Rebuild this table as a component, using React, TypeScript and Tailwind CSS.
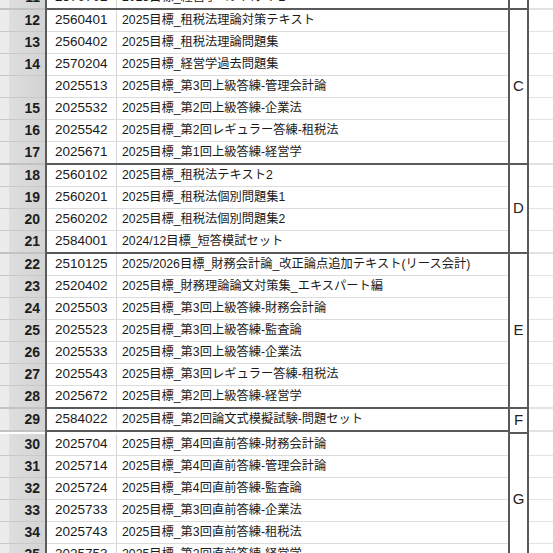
type Row = { no: string; code: string; title: string };
type Group = { letter: string; rows: Row[] };

const groups: Group[] = [
  { letter: "", rows: [{ no: "11", code: "2570702", title: "2025目標_経営学コンパクト2" }] },
  {
    letter: "C",
    rows: [
      { no: "12", code: "2560401", title: "2025目標_租税法理論対策テキスト" },
      { no: "13", code: "2560402", title: "2025目標_租税法理論問題集" },
      { no: "14", code: "2570204", title: "2025目標_経営学過去問題集" },
      { no: "", code: "2025513", title: "2025目標_第3回上級答練-管理会計論" },
      { no: "15", code: "2025532", title: "2025目標_第2回上級答練-企業法" },
      { no: "16", code: "2025542", title: "2025目標_第2回レギュラー答練-租税法" },
      { no: "17", code: "2025671", title: "2025目標_第1回上級答練-経営学" },
    ],
  },
  {
    letter: "D",
    rows: [
      { no: "18", code: "2560102", title: "2025目標_租税法テキスト2" },
      { no: "19", code: "2560201", title: "2025目標_租税法個別問題集1" },
      { no: "20", code: "2560202", title: "2025目標_租税法個別問題集2" },
      { no: "21", code: "2584001", title: "2024/12目標_短答模試セット" },
    ],
  },
  {
    letter: "E",
    rows: [
      { no: "22", code: "2510125", title: "2025/2026目標_財務会計論_改正論点追加テキスト(リース会計)" },
      { no: "23", code: "2520402", title: "2025目標_財務理論論文対策集_エキスパート編" },
      { no: "24", code: "2025503", title: "2025目標_第3回上級答練-財務会計論" },
      { no: "25", code: "2025523", title: "2025目標_第3回上級答練-監査論" },
      { no: "26", code: "2025533", title: "2025目標_第3回上級答練-企業法" },
      { no: "27", code: "2025543", title: "2025目標_第3回レギュラー答練-租税法" },
      { no: "28", code: "2025672", title: "2025目標_第2回上級答練-経営学" },
    ],
  },
  { letter: "F", rows: [{ no: "29", code: "2584022", title: "2025目標_第2回論文式模擬試験-問題セット" }] },
  {
    letter: "G",
    rows: [
      { no: "30", code: "2025704", title: "2025目標_第4回直前答練-財務会計論" },
      { no: "31", code: "2025714", title: "2025目標_第4回直前答練-管理会計論" },
      { no: "32", code: "2025724", title: "2025目標_第4回直前答練-監査論" },
      { no: "33", code: "2025733", title: "2025目標_第3回直前答練-企業法" },
      { no: "34", code: "2025743", title: "2025目標_第3回直前答練-租税法" },
      { no: "35", code: "2025753", title: "2025目標_第2回直前答練-経営学" },
    ],
  },
];

function GroupBlock({ group }: { group: Group }) {
  const last = group.rows.length - 1;
  return (
    <div className="flex">
      {/* row headers */}
      <div className="flex w-[45px] shrink-0 flex-col">
        {group.rows.map((r, i) => (
          <div
            key={i}
            className={`flex h-[22px] ${i === last ? "h-[23px] border-b-2 border-[#c2c2c2]" : "border-b border-[#c9c9c9]"}`}
          >
            <div className="w-[9px] bg-[#ececec]" />
            <div className="flex flex-1 items-center justify-end bg-gradient-to-r from-[#dedede] to-[#d3d3d3] pr-[5px] text-[14px] font-bold text-[#1c1c1c]">
              {r.no}
            </div>
          </div>
        ))}
      </div>

      {/* code + title */}
      <div className="flex w-[463px] shrink-0 flex-col border-l-2 border-[#5a5a5a] bg-white">
        {group.rows.map((r, i) => (
          <div
            key={i}
            className={`flex h-[22px] ${i === last ? "h-[23px] border-b-2 border-[#5a5a5a]" : "border-b border-[#dcdcdc]"}`}
          >
            <div className="flex w-[70px] items-center border-r border-[#d6d6d6] pl-[8px] text-[13.5px] text-[#1a1a1a]">
              {r.code}
            </div>
            <div className="flex flex-1 items-center overflow-hidden whitespace-nowrap pl-[5px] text-[12.25px] text-[#1a1a1a]">
              {r.title}
            </div>
          </div>
        ))}
      </div>

      {/* merged letter cell */}
      <div className="flex w-[21px] shrink-0 items-center justify-center border-x-2 border-b-2 border-[#5a5a5a] bg-white text-[15px] text-[#222]">
        {group.letter}
      </div>

      {/* next empty column */}
      <div className="flex flex-1 flex-col bg-white">
        {group.rows.map((_, i) => (
          <div
            key={i}
            className={`h-[22px] ${i === last ? "h-[23px] border-b-2 border-[#e2e2e2]" : "border-b border-[#e2e2e2]"}`}
          />
        ))}
      </div>
    </div>
  );
}

export default function App() {
  return (
    <div
      className="h-[553px] w-[553px] overflow-hidden bg-white"
      style={{ fontFamily: '"Liberation Sans", "Noto Sans CJK JP", sans-serif' }}
    >
      <div className="-mt-[13px]">
        {groups.map((g, i) => (
          <GroupBlock key={i} group={g} />
        ))}
      </div>
    </div>
  );
}
